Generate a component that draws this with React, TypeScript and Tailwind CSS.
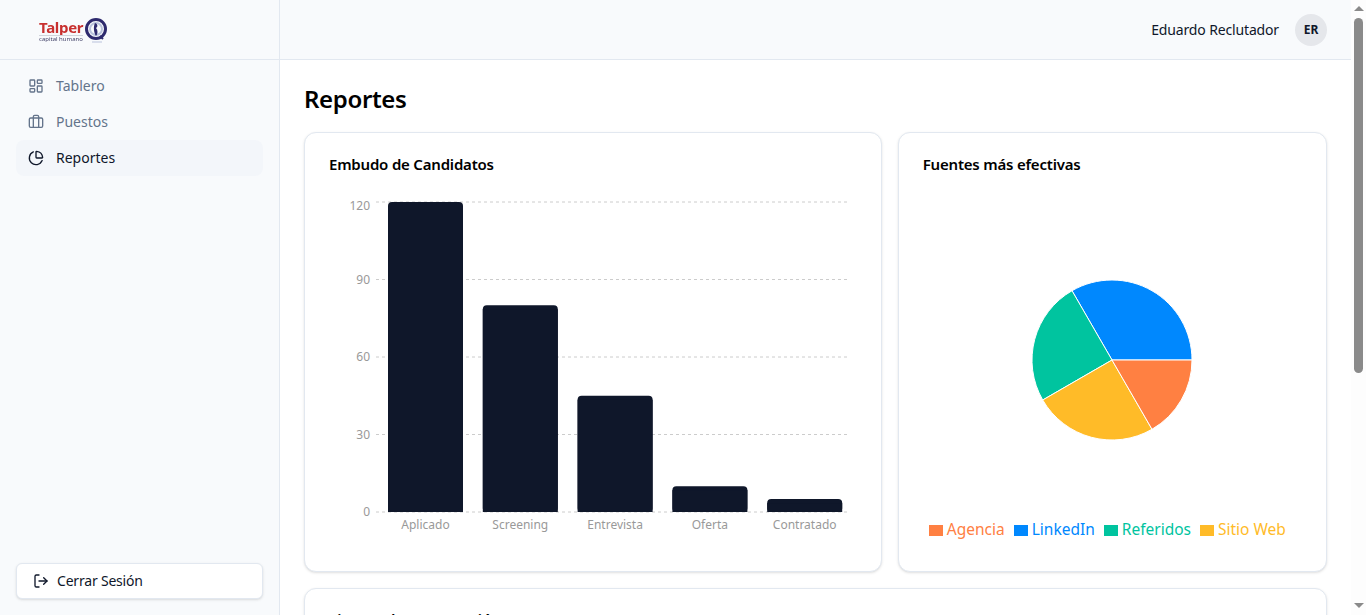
import { LayoutDashboard, Briefcase, ChartPie, LogOut } from 'lucide-react'

const nav = [
  { label: 'Tablero', icon: LayoutDashboard },
  { label: 'Puestos', icon: Briefcase },
  { label: 'Reportes', icon: ChartPie, active: true },
]

const funnel = [
  { label: 'Aplicado', value: 120 },
  { label: 'Screening', value: 80 },
  { label: 'Entrevista', value: 45 },
  { label: 'Oferta', value: 10 },
  { label: 'Contratado', value: 5 },
]

const sources = [
  { label: 'Agencia', text: 'text-[#FF8042]', bg: 'bg-[#FF8042]' },
  { label: 'LinkedIn', text: 'text-[#0088FE]', bg: 'bg-[#0088FE]' },
  { label: 'Referidos', text: 'text-[#00C49F]', bg: 'bg-[#00C49F]' },
  { label: 'Sitio Web', text: 'text-[#FFBB28]', bg: 'bg-[#FFBB28]' },
]

const Logo = () => (
  <div className="flex items-center blur-[0.3px]">
    <div className="flex flex-col items-start pt-[3px]">
      <span className="text-[15px] leading-[15px] font-bold text-[#c8302f] tracking-[-0.3px]">Talper</span>
      <span className="text-[6px] leading-[7px] text-[#44446a] border-t border-gray-300">capital humano</span>
    </div>
    <svg width="24" height="28" viewBox="0 0 24 28" className="ml-px">
      <circle cx="12" cy="13" r="9.5" fill="none" stroke="#2e2a6e" strokeWidth="3" />
      <circle cx="12" cy="13" r="6" fill="none" stroke="#b9c2dc" strokeWidth="2" />
      <path d="M11 7c3 1 3 4 1 5 2 2 2 6 0 8-2-3-3-9-1-13z" fill="#2e2a6e" />
      <path d="M16 20l3 3" stroke="#2e2a6e" strokeWidth="2" />
      <path d="M8 26h10" stroke="#b9c2dc" strokeWidth="1" />
    </svg>
  </div>
)

const FunnelChart = () => {
  const top = 202
  const bottom = 512
  const y = (v: number) => bottom - (v / 120) * (bottom - top)
  return (
    <svg width="528" height="350" viewBox="329 197 528 350" className="block">
      {[0, 30, 60, 90, 120].map((v) => (
        <g key={v}>
          <line x1="376" x2="850" y1={y(v)} y2={y(v)} stroke="#ccc" strokeDasharray="3 3" />
          <text x="370" y={v === 120 ? 210 : y(v) + 4} textAnchor="end" fontSize="12" fill="#999">
            {v}
          </text>
        </g>
      ))}
      {funnel.map((d, i) => {
        const x = 388 + i * 94.8
        return (
          <g key={d.label}>
            <rect x={x} y={y(d.value)} width="75" height={bottom - y(d.value)} rx="4" fill="#0f172a" />
            <rect x={x} y={y(d.value) + 4} width="75" height={Math.max(bottom - y(d.value) - 4, 0)} fill="#0f172a" />
            <text x={x + 37.5} y="529" textAnchor="middle" fontSize="12" fill="#999">
              {d.label}
            </text>
          </g>
        )
      })}
    </svg>
  )
}

const SourcesPie = () => (
  <svg width="200" height="200" viewBox="0 0 200 200">
    <g stroke="#fff" strokeWidth="1">
      <path d="M100 100L180 100A80 80 0 0 0 60 30.72Z" fill="#0088FE" />
      <path d="M100 100L60 30.72A80 80 0 0 0 30.72 140Z" fill="#00C49F" />
      <path d="M100 100L30.72 140A80 80 0 0 0 140 169.28Z" fill="#FFBB28" />
      <path d="M100 100L140 169.28A80 80 0 0 0 180 100Z" fill="#FF8042" />
    </g>
  </svg>
)

// the picture shows the browser's own scrollbar, which a headless page doesn't paint
const Scrollbar = () => (
  <div className="flex w-[15px] shrink-0 flex-col items-center bg-[#fdfdfd] pt-[6px] pb-[7px]">
    <svg width="10" height="5" viewBox="0 0 10 5" className="block shrink-0">
      <polygon points="5,0 10,5 0,5" fill="#8a8a8a" />
    </svg>
    <span className="mt-[7px] h-[355px] w-[9px] rounded-full bg-[#8a8a8a]" />
    <svg width="10" height="5" viewBox="0 0 10 5" className="mt-auto block shrink-0">
      <polygon points="0,0 10,0 5,5" fill="#8a8a8a" />
    </svg>
  </div>
)

export default function App() {
  return (
    <div className="flex h-screen overflow-hidden bg-white text-[#0f172a] font-['Noto_Sans',sans-serif]">
      <aside className="flex w-[280px] shrink-0 flex-col border-r border-[#e2e8f0] bg-[#f8fafc]">
        <div className="flex h-[60px] items-center border-b border-[#e2e8f0] pl-[39px]">
          <Logo />
        </div>
        <nav className="flex flex-1 flex-col px-4 pt-2">
          {nav.map((item) => (
            <a
              key={item.label}
              className={`flex h-9 items-center gap-3 rounded-lg px-3 text-sm ${
                item.active ? 'bg-[#f3f6fa] text-[#0f172a]' : 'text-[#64748b]'
              }`}
            >
              <item.icon size={16} />
              {item.label}
            </a>
          ))}
        </nav>
        <div className="p-4">
          <button className="flex h-9 w-full items-center gap-2 rounded-md border border-[#e2e8f0] bg-white pl-4 text-sm tracking-[-0.2px] shadow-sm">
            <LogOut size={16} />
            Cerrar Sesión
          </button>
        </div>
      </aside>
      <div className="flex min-w-0 flex-1 flex-col overflow-hidden">
        <header className="flex h-[60px] shrink-0 items-center justify-end gap-4 border-b border-[#e2e8f0] bg-[#f8fafc] px-6">
          <span className="text-sm tracking-[-0.15px]">Eduardo Reclutador</span>
          <span className="flex size-8 items-center justify-center rounded-full bg-[#e5e7eb] text-xs font-bold">ER</span>
        </header>
        <main className="p-6">
          <h1 className="mb-[18px] text-2xl leading-[30px] font-semibold tracking-[-0.35px] text-black">Reportes</h1>
          <div className="grid grid-cols-7 gap-4">
            <section className="col-span-4 rounded-xl border border-[#e2e8f0] bg-white p-6 shadow-sm">
              <h2 className="mb-[26px] text-[15px] leading-[14px] font-semibold tracking-[-0.2px] text-black">Embudo de Candidatos</h2>
              <FunnelChart />
            </section>
            <section className="col-span-3 rounded-xl border border-[#e2e8f0] bg-white p-6 shadow-sm">
              <h2 className="mb-[26px] text-[15px] leading-[14px] font-semibold tracking-[-0.2px] text-black">Fuentes más efectivas</h2>
              <div className="flex h-[350px] flex-col">
                <div className="flex h-[321px] items-center justify-center pt-[5px]">
                  <SourcesPie />
                </div>
                <div className="flex h-6 items-center justify-center gap-[9px] pr-[10px]">
                  {sources.map((s) => (
                    <span key={s.label} className={`flex items-center gap-1 text-[15.5px] ${s.text}`}>
                      <span className={`h-[11px] w-3.5 ${s.bg}`} />
                      {s.label}
                    </span>
                  ))}
                </div>
              </div>
            </section>
            <section className="col-span-7 h-[300px] rounded-xl border border-[#e2e8f0] bg-white px-6 pt-[23px] shadow-sm">
              <h2 className="text-[15px] leading-[14px] font-semibold tracking-[-0.2px] text-black">Tiempo de Contratación</h2>
            </section>
          </div>
        </main>
      </div>
      <Scrollbar />
    </div>
  )
}
